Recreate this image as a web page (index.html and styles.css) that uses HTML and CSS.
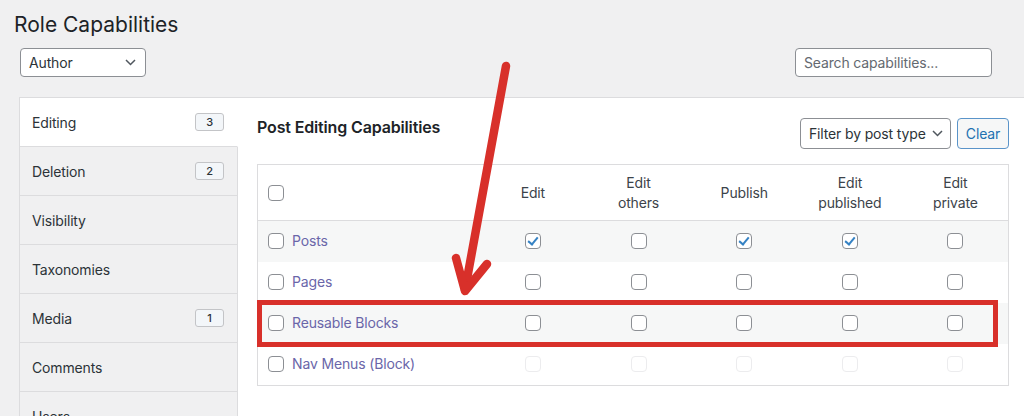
FILE: index.html
```html
<!DOCTYPE html>
<html>

<head>
    <title>Role Capabilities</title>
    <meta charset=utf-8>
    <meta name=viewport content="width=device-width, initial-scale=1">

    <link rel="stylesheet" href="styles.css">
</head>

<body>
    <div id="wrap">
        <h1 class="page-title">Role Capabilities</h1>
        <div class="toolbar">
            <div class="select role-select">
                <span>Author</span>
                <svg class="chev" width="11" height="7" viewBox="0 0 11 7"><path d="M1 1l4.5 4.5L10 1" /></svg>
            </div>
            <input type="text" class="search" placeholder="Search capabilities...">
        </div>

        <div class="panel">
            <ul class="tabs">
                <li class="active">Editing <span class="count">3</span></li>
                <li>Deletion <span class="count">2</span></li>
                <li>Visibility</li>
                <li>Taxonomies</li>
                <li>Media <span class="count">1</span></li>
                <li>Comments</li>
                <li>Users</li>
            </ul>

            <div class="content">
                <div class="content-head">
                    <h2>Post Editing Capabilities</h2>
                    <div class="filters">
                        <div class="select type-select">
                            <span>Filter by post type</span>
                            <svg class="chev" width="11" height="7" viewBox="0 0 11 7"><path d="M1 1l4.5 4.5L10 1" /></svg>
                        </div>
                        <button class="butt">Clear</button>
                    </div>
                </div>

                <table class="caps">
                    <thead>
                        <tr>
                            <th class="name"><input type="checkbox" class="cb"></th>
                            <th>Edit</th>
                            <th>Edit<br>others</th>
                            <th>Publish</th>
                            <th>Edit<br>published</th>
                            <th>Edit<br>private</th>
                        </tr>
                    </thead>
                    <tbody>
                        <tr class="alt">
                            <td class="name"><input type="checkbox" class="cb"><a href="#">Posts</a></td>
                            <td><input type="checkbox" class="cb" checked></td>
                            <td><input type="checkbox" class="cb"></td>
                            <td><input type="checkbox" class="cb" checked></td>
                            <td><input type="checkbox" class="cb" checked></td>
                            <td><input type="checkbox" class="cb"></td>
                        </tr>
                        <tr>
                            <td class="name"><input type="checkbox" class="cb"><a href="#">Pages</a></td>
                            <td><input type="checkbox" class="cb"></td>
                            <td><input type="checkbox" class="cb"></td>
                            <td><input type="checkbox" class="cb"></td>
                            <td><input type="checkbox" class="cb"></td>
                            <td><input type="checkbox" class="cb"></td>
                        </tr>
                        <tr class="alt">
                            <td class="name"><input type="checkbox" class="cb"><a href="#">Reusable Blocks</a></td>
                            <td><input type="checkbox" class="cb"></td>
                            <td><input type="checkbox" class="cb"></td>
                            <td><input type="checkbox" class="cb"></td>
                            <td><input type="checkbox" class="cb"></td>
                            <td><input type="checkbox" class="cb"></td>
                        </tr>
                        <tr>
                            <td class="name"><input type="checkbox" class="cb"><a href="#">Nav Menus (Block)</a></td>
                            <td><input type="checkbox" class="cb" disabled></td>
                            <td><input type="checkbox" class="cb" disabled></td>
                            <td><input type="checkbox" class="cb" disabled></td>
                            <td><input type="checkbox" class="cb" disabled></td>
                            <td><input type="checkbox" class="cb" disabled></td>
                        </tr>
                    </tbody>
                </table>
            </div>
        </div>
    </div>

    <!-- annotation drawn over the screenshot -->
    <div class="mark-box"></div>
    <svg class="mark-arrow" width="1024" height="416" viewBox="0 0 1024 416">
        <path d="M506 66 L465 290" />
        <path d="M456 258 L465 291 L487 264" />
    </svg>
</body>

</html>
```

FILE: styles.css
```css
html,
body {
    height: 416px;
}

body {
    margin: 0;
    font-family: Inter, "Noto Sans", sans-serif;
    font-size: 14px;
    letter-spacing: -0.15px;
    color: #1d2327;
    background: #f0f0f1;
    overflow: hidden;
}

.page-title {
    margin: 0;
    padding: 10px 0 0 14px;
    font-size: 21px;
    font-weight: 400;
    letter-spacing: 0;
    line-height: 29px;
}

.toolbar {
    display: flex;
    justify-content: space-between;
    align-items: center;
    margin-top: 9px;
    padding: 0 32px 0 20px;
}

.select {
    display: flex;
    align-items: center;
    justify-content: space-between;
    box-sizing: border-box;
    height: 29px;
    padding: 0 9px 0 8px;
    background: #fff;
    border: 1px solid #8c8f94;
    border-radius: 4px;
    color: #2c3338;
}

.chev path {
    fill: none;
    stroke: #50575e;
    stroke-width: 1.5;
}

.role-select {
    width: 126px;
}

.search {
    box-sizing: border-box;
    width: 197px;
    height: 29px;
    padding: 0 8px;
    font: inherit;
    letter-spacing: inherit;
    border: 1px solid #8c8f94;
    border-radius: 4px;
    background: #fff;
}

.search::placeholder {
    color: #646970;
}

.panel {
    display: flex;
    width: 1010px;
    height: 319px;
    margin: 20px 0 0 19px;
    box-sizing: border-box;
    background: #fff;
    border: 1px solid #dcdcde;
    border-bottom: 0;
    overflow: hidden;
}

.tabs {
    margin: 0;
    padding: 0;
    list-style: none;
    width: 218px;
    flex: none;
}

.tabs li {
    display: flex;
    align-items: center;
    justify-content: space-between;
    box-sizing: border-box;
    height: 49px;
    padding: 0 13px 0 12px;
    background: #f0f0f1;
    border-right: 1px solid #dcdcde;
    border-bottom: 1px solid #dcdcde;
    color: #2c3338;
}

.tabs li.active {
    background: #fff;
    border-right-color: #fff;
}

.count {
    box-sizing: border-box;
    width: 29px;
    height: 18px;
    line-height: 16px;
    text-align: center;
    font-size: 11px;
    font-weight: 500;
    background: #f3f6f9;
    border: 1px solid #c3c4c7;
    border-radius: 3px;
}

.content {
    flex: 1;
    padding: 20px 19px 0 19px;
}

.content-head {
    display: flex;
    justify-content: space-between;
    align-items: flex-start;
    margin-bottom: 15px;
}

h2 {
    margin: -1px 0 0 0;
    font-size: 16px;
    font-weight: 600;
    line-height: 20px;
}

.filters {
    display: flex;
    gap: 6px;
}

.type-select {
    width: 151px;
    height: 31px;
    padding-right: 7px;
}

.butt {
    box-sizing: border-box;
    width: 52px;
    height: 31px;
    font: inherit;
    letter-spacing: inherit;
    color: #2271b1;
    background: #f6f7f7;
    border: 1px solid #5a94c9;
    border-radius: 4px;
}

.caps {
    width: 752px;
    border-collapse: collapse;
    border: 1px solid #dcdcde;
    table-layout: fixed;
}

.caps th {
    height: 55px;
    padding: 0;
    font-weight: 400;
    line-height: 20px;
    color: #3c434a;
    text-align: center;
    border-bottom: 1px solid #dcdcde;
}

.caps th.name {
    width: 212px;
}

.caps td {
    height: 39px;
    padding: 0 0 2px 0;
    text-align: center;
}

.caps .name {
    text-align: left;
    padding-left: 10px;
}

.caps tr.alt td {
    background: #f6f7f7;
}

.caps a {
    color: #6a66a9;
    text-decoration: none;
}

.cb {
    appearance: none;
    position: relative;
    width: 16px;
    height: 16px;
    margin: -1px 8px 0 0;
    vertical-align: middle;
    background: #fff;
    border: 1px solid #8c8f94;
    border-radius: 4px;
}

td:not(.name) .cb {
    margin-right: 0;
}

.cb:checked::before {
    content: "";
    position: absolute;
    left: 4px;
    top: 1px;
    width: 4px;
    height: 8px;
    border-right: 2px solid #3582c4;
    border-bottom: 2px solid #3582c4;
    transform: rotate(40deg);
}

.cb:disabled {
    border-color: #ececee;
}

.mark-box {
    position: absolute;
    left: 257px;
    top: 300px;
    width: 741px;
    height: 47px;
    box-sizing: border-box;
    border: 5px solid #d8302a;
}

.mark-arrow {
    position: absolute;
    left: 0;
    top: 0;
    pointer-events: none;
}

.mark-arrow path {
    fill: none;
    stroke: #d8302a;
    stroke-width: 8.5;
    stroke-linecap: round;
    stroke-linejoin: round;
}
```
